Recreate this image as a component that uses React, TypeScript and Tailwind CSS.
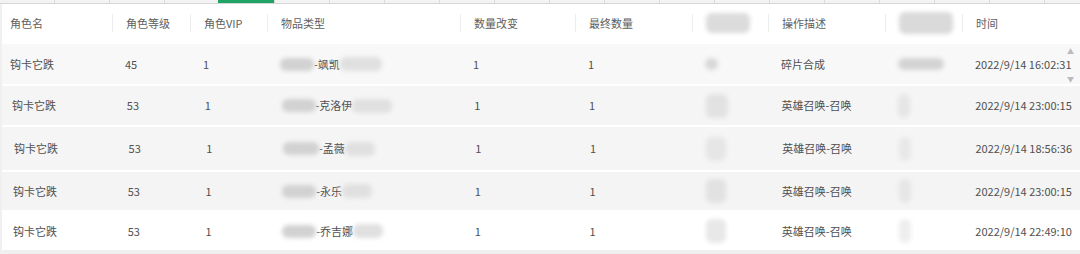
import React from "react";

const widths = [112, 78, 77, 193, 115, 117, 76, 117, 77, 118];

type Blur = { w: number; h: number; tone: string };
type Cell = string | Blur | { pre: Blur; text: string; post: Blur };

const soft = (w: number, h = 14, tone = "bg-[#d6d6d6]"): Blur => ({ w, h, tone });

const header: Cell[] = [
  "角色名",
  "角色等级",
  "角色VIP",
  "物品类型",
  "数量改变",
  "最终数量",
  soft(44, 20, "bg-[#dcdcdc]"),
  "操作描述",
  soft(54, 22, "bg-[#dadada]"),
  "时间",
];

const item = (text: string, pre: number, post: number): Cell => ({
  pre: soft(pre, 13, "bg-[#d2d2d2]"),
  text,
  post: soft(post, 14, "bg-[#e0e0e0]"),
});

const rows: { shift: number; h: number; bg: string; cells: Cell[] }[] = [
  {
    shift: 0,
    h: 42,
    bg: "bg-[#f8f8f8]",
    cells: ["钩卡它跌", "45", "1", item("-飒凯", 34, 42), "1", "1", soft(13, 12, "bg-[#d8d8d8]"), "碎片合成", soft(46, 12, "bg-[#d4d4d4]"), "2022/9/14 16:02:31"],
  },
  {
    shift: 2,
    h: 41,
    bg: "bg-[#f5f5f5]",
    cells: ["钩卡它跌", "53", "1", item("-克洛伊", 34, 40), "1", "1", soft(22, 24, "bg-[#e2e2e2]"), "英雄召唤-召唤", soft(12, 24, "bg-[#e6e6e6]"), "2022/9/14 23:00:15"],
  },
  {
    shift: 4,
    h: 45,
    bg: "bg-[#f5f5f5]",
    cells: ["钩卡它跌", "53", "1", item("-孟薇", 36, 30), "1", "1", soft(20, 24, "bg-[#e6e6e6]"), "英雄召唤-召唤", soft(12, 24, "bg-[#e8e8e8]"), "2022/9/14 18:56:36"],
  },
  {
    shift: 3,
    h: 40,
    bg: "bg-[#f4f4f4]",
    cells: ["钩卡它跌", "53", "1", item("-永乐", 34, 30), "1", "1", soft(20, 24, "bg-[#e2e2e2]"), "英雄召唤-召唤", soft(12, 24, "bg-[#e6e6e6]"), "2022/9/14 23:00:15"],
  },
  {
    shift: 3,
    h: 40,
    bg: "bg-white",
    cells: ["钩卡它跌", "53", "1", item("-乔吉娜", 34, 30), "1", "1", soft(20, 24, "bg-[#e8e8e8]"), "英雄召唤-召唤", soft(12, 24, "bg-[#eeeeee]"), "2022/9/14 22:49:10"],
  },
];

function Blob({ b }: { b: Blur }) {
  return <div className={`rounded-[6px] blur-[2px] ${b.tone}`} style={{ width: b.w, height: b.h }} />;
}

function CellView({ cell }: { cell: Cell }) {
  if (typeof cell === "string") return <span className="whitespace-nowrap">{cell}</span>;
  if ("text" in cell)
    return (
      <div className="flex items-center whitespace-nowrap">
        <Blob b={cell.pre} />
        <span>{cell.text}</span>
        <Blob b={cell.post} />
      </div>
    );
  return <Blob b={cell} />;
}

export default function App() {
  return (
    <div
      className="relative h-[254px] w-[1080px] overflow-hidden bg-[#f0f0f0] text-[11px] text-[#505050]"
      style={{ fontFamily: '"Noto Sans CJK SC", "Noto Sans", sans-serif' }}
    >
      {/* sheet strip above the pasted table */}
      <div className="relative flex h-[4px] border-b border-[#d6d6d6] bg-[#f3f3f3]">
        {Array.from({ length: 20 }).map((_, i) => (
          <div key={i} className="h-full w-[55px] shrink-0 border-r border-[#dadada]" />
        ))}
        <div className="absolute left-[218px] top-0 h-[3px] w-[56px] bg-[#21a366]" />
      </div>

      <div className="ml-[2px] bg-white">
        {/* header */}
        <div className="flex h-[38px] items-center bg-white text-[#606060]">
          {header.map((c, i) => (
            <div
              key={i}
              className={`flex h-[18px] items-center border-[#ededed] ${i === 0 ? "pl-[8px]" : "border-l pl-[13px]"}`}
              style={{ width: widths[i] - (i === 0 ? 2 : 0) }}
            >
              <CellView cell={c} />
            </div>
          ))}
        </div>

        {rows.map((r, ri) => (
          <div key={ri} className={`flex items-center border-t-2 border-white ${r.bg}`} style={{ height: r.h }}>
            {r.cells.map((c, i) => (
              <div
                key={i}
                className={`flex items-center ${i === 0 ? "pl-[8px]" : "pl-[13px]"}`}
                style={{ width: widths[i] - (i === 0 ? 2 : 0), marginLeft: i === 0 ? r.shift : 0 }}
              >
                <CellView cell={c} />
              </div>
            ))}
          </div>
        ))}
      </div>

      {/* scrollbar arrows beside the first row */}
      <div className="absolute right-[6px] top-[48px] text-[7px] leading-none text-[#bbb]">▲</div>
      <div className="absolute right-[6px] top-[76px] text-[7px] leading-none text-[#bbb]">▼</div>
    </div>
  );
}
